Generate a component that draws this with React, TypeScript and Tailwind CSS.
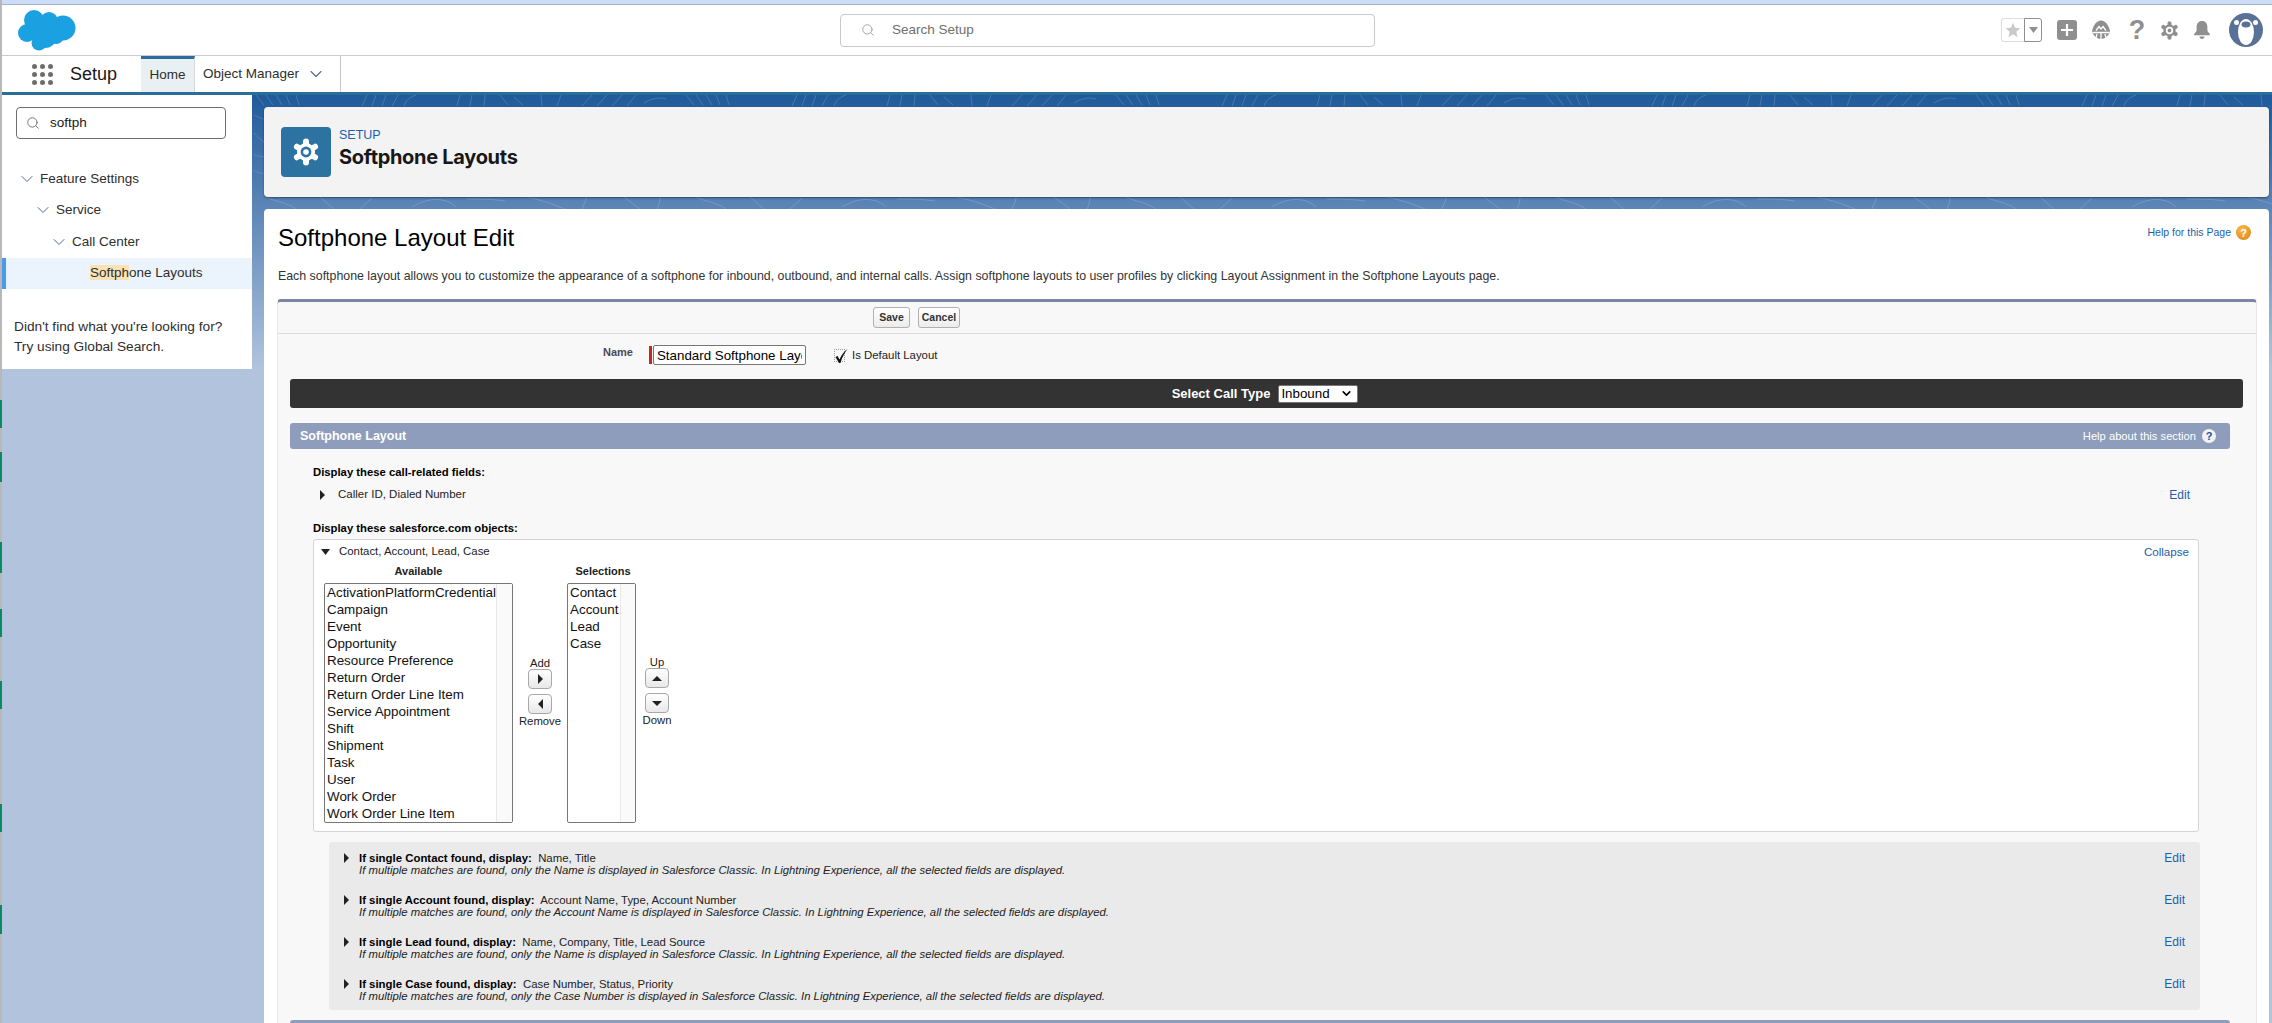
import { ChevronDown, Search } from "lucide-react";

const BLUE = "text-[#1a60ad]";

const available = ["ActivationPlatformCredential", "Campaign", "Event", "Opportunity", "Resource Preference", "Return Order", "Return Order Line Item", "Service Appointment", "Shift", "Shipment", "Task", "User", "Work Order", "Work Order Line Item"];
const selections = ["Contact", "Account", "Lead", "Case"];

const singles = [
  { obj: "Contact", fields: "Name, Title", name: "Name" },
  { obj: "Account", fields: "Account Name, Type, Account Number", name: "Account Name" },
  { obj: "Lead", fields: "Name, Company, Title, Lead Source", name: "Name" },
  { obj: "Case", fields: "Case Number, Status, Priority", name: "Case Number" },
];

function Tri({ dir, className = "" }: { dir: "right" | "left" | "up" | "down"; className?: string }) {
  const pts = { right: "0,0 10,5 0,10", left: "10,0 0,5 10,10", up: "0,10 5,0 10,10", down: "0,0 10,0 5,10" }[dir];
  return (
    <svg viewBox="0 0 10 10" preserveAspectRatio="none" className={className}>
      <polygon points={pts} fill="currentColor" />
    </svg>
  );
}

function Gear({ className = "", ring, dot }: { className?: string; ring: string; dot: string }) {
  return (
    <svg viewBox="0 0 28 28" className={className}>
      {[0, 60, 120].map((a) => (
        <line key={a} x1="14" y1="3.5" x2="14" y2="24.5" stroke="currentColor" strokeWidth="6" strokeLinecap="round" transform={`rotate(${a} 14 14)`} />
      ))}
      <circle cx="14" cy="14" r="9" fill="currentColor" />
      <circle cx="14" cy="14" r="5.4" fill={ring} />
      <circle cx="14" cy="14" r="2.8" fill={dot} />
    </svg>
  );
}

function ListBox({ items, width, track }: { items: string[]; width: string; track: string }) {
  return (
    <div className={`${width} h-[240px] flex border border-[#767676] rounded-[2px] bg-white overflow-hidden text-[13.4px] leading-[17px] text-[#111]`}>
      <div className="flex-1 pl-[2px] whitespace-nowrap overflow-hidden">
        {items.map((i) => <div key={i}>{i}</div>)}
      </div>
      <div className={`${track} h-full bg-[#fafafa] border-l border-[#e8e8e8]`} />
    </div>
  );
}

function ArrowBtn({ dir }: { dir: "right" | "left" | "up" | "down" }) {
  const size = dir === "right" || dir === "left" ? "w-[5px] h-[10px]" : "w-[10px] h-[5px]";
  return (
    <div className="w-[24px] h-[20px] flex items-center justify-center border border-[#a8a8a8] rounded-[4px] bg-[linear-gradient(#ffffff,#e8e8e8)] text-[#222]">
      <Tri dir={dir} className={size} />
    </div>
  );
}

function SectionHead({ title, help }: { title: string; help?: boolean }) {
  return (
    <div className="ml-[12px] mr-[26px] h-[26px] shrink-0 rounded-[3px] bg-[#8e9dbc] flex items-center justify-between pl-[10px] pr-[14px] text-white">
      <span className="text-[12.5px] font-bold">{title}</span>
      {help && (
        <span className="flex items-center gap-[6px] text-[11.2px]">
          Help about this section
          <span className="w-[14px] h-[14px] rounded-full bg-[#f2f2f2] text-[#1a4f9c] text-[11px] font-bold flex items-center justify-center">?</span>
        </span>
      )}
    </div>
  );
}

function BackgroundLines() {
  return (
    <svg className="absolute left-0 top-0 w-full h-[130px]" fill="none">
      <defs>
        <pattern id="banner" width="430" height="130" patternUnits="userSpaceOnUse" x="250">
          <g stroke="#ffffff" strokeOpacity="0.16" strokeWidth="1">
            <path d="M4 0l8 10M14 0l7 10M24 0l6 10M34 0l4 10M44 0l3 10M110 11l5-11M120 11l4-11M130 11l4-11M140 11l6-11M152 11c2-6 6-9 12-11" />
            <path d="M205 11l3-11M218 11l2-11M232 11l1-11M248 0l8 10M262 2l9 8M290 11l-1-11M305 11l4-11M330 11l10-11M345 11l10-11M360 11l10-11M375 11l9-11M392 8c8-5 16-6 22-4" />
            <path d="M14 102c10 5 20 5 30 12M68 102l14 12M120 103l-12 11M160 112c16-10 34-10 44 0M215 104c12 0 26 0 38 2M275 102c14 3 26 7 38 12M330 114c2-5 4-8 4-12M372 102l16 12M405 114c2-4 3-8 3-12" />
          </g>
        </pattern>
      </defs>
      <rect width="100%" height="100%" fill="url(#banner)" />
      <g stroke="#ffffff" strokeOpacity="0.14">
        <path d="M252 20c4 2 8 4 12 4M252 38c4 5 8 8 12 10M252 60c4 1 8 2 12 2M252 75c4 3 8 4 12 3" />
      </g>
    </svg>
  );
}

export default function App() {
  return (
    <div className="w-[2272px] h-[1023px] overflow-hidden flex bg-white font-['Liberation_Sans',sans-serif] text-[#181818]">
      {/* window edge behind the browser */}
      <div className="w-[2px] shrink-0 bg-[#b8b8b8] flex flex-col">
        <div className="mt-[400px] h-[28px] bg-[#0a8a62]" />
        <div className="mt-[24px] h-[30px] bg-[#0a8a62]" />
        <div className="mt-[60px] h-[31px] bg-[#0a8a62]" />
        <div className="mt-[36px] h-[28px] bg-[#0a8a62]" />
        <div className="mt-[44px] h-[28px] bg-[#0a8a62]" />
        <div className="mt-[95px] h-[28px] bg-[#0a8a62]" />
        <div className="mt-[73px] h-[29px] bg-[#0a8a62]" />
      </div>

      <div className="flex-1 min-w-0 flex flex-col">
        <div className="h-[5px] shrink-0 bg-[#ccdcf6] border-b border-[#a5b3cd]" />

        {/* global header */}
        <div className="h-[51px] shrink-0 border-b border-[#cccccc] flex items-center">
          <svg viewBox="0 0 58 41" className="ml-[16px] w-[58px] h-[41px] shrink-0" fill="#1ba0e1">
            <circle cx="16" cy="10" r="10" />
            <circle cx="31" cy="11" r="9" />
            <circle cx="45" cy="18" r="12.5" />
            <circle cx="27" cy="26" r="12" />
            <circle cx="21" cy="33" r="7.5" />
            <circle cx="9" cy="23" r="9" />
            <circle cx="38" cy="26" r="8" />
            <rect x="12" y="10" width="24" height="18" />
          </svg>
          <div className="ml-[764px] w-[535px] h-[33px] shrink-0 border border-[#c9c9c9] rounded-[4px] flex items-center pl-[20px] text-[13.5px] text-[#706e6b]">
            <Search className="w-[14px] h-[14px] text-[#a0a0a0]" strokeWidth={1.6} />
            <span className="ml-[17px]">Search Setup</span>
          </div>
          <div className="ml-[626px] w-[41px] h-[24px] shrink-0 flex">
            <div className="w-[23px] border border-r-0 border-[#dddddd] rounded-l-[3px] flex items-center justify-center">
              <svg viewBox="0 0 20 20" className="w-[16px] h-[16px]"><polygon points="10,1 12.6,7.2 19,7.8 14.2,12.2 15.6,19 10,15.4 4.4,19 5.8,12.2 1,7.8 7.4,7.2" fill="#c9c9c9" /></svg>
            </div>
            <div className="w-[18px] border border-[#8f8f8f] rounded-r-[3px] flex items-center justify-center text-[#8f8f8f]">
              <Tri dir="down" className="w-[9px] h-[6px]" />
            </div>
          </div>
          <svg viewBox="0 0 20 20" className="ml-[15px] w-[20px] h-[20px] shrink-0">
            <rect width="20" height="20" rx="3" fill="#8f8f8f" />
            <path d="M10 4v12M4 10h12" stroke="#fff" strokeWidth="2.2" />
          </svg>
          <svg viewBox="0 0 20 20" className="ml-[14px] w-[20px] h-[20px] shrink-0">
            <path d="M10 0.5c4.5 0 8 5 9 11-1.5 4.5-5 7.5-9 7.5s-7.5-3-9-7.5c1-6 4.5-11 9-11z" fill="#8f8f8f" />
            <path d="M1.5 12.5h17M5 10.5l3-4 2 2.5 2-2.5 3 4M10 13v6M6 14l-1 4M14 14l1 4" stroke="#fff" strokeWidth="1.3" fill="none" />
          </svg>
          <span className="ml-[20px] w-[12px] shrink-0 text-[27px] leading-[27px] text-[#8f8f8f] font-bold flex justify-center">?</span>
          <Gear className="ml-[17px] w-[19px] h-[19px] shrink-0 text-[#8f8f8f]" ring="#ffffff" dot="#8f8f8f" />
          <svg viewBox="0 0 18 18" className="ml-[14px] w-[18px] h-[18px] shrink-0" fill="#8f8f8f">
            <path d="M9 0c3.4 0 5.4 2.6 5.4 6v3.5c0 1.2 2.3 2.8 2.6 4 .1.4-.2.7-.6.7H1.6c-.4 0-.7-.3-.6-.7.3-1.2 2.6-2.8 2.6-4V6C3.6 2.6 5.6 0 9 0z" />
            <path d="M6.5 15.5h5c0 1.4-1.1 2.5-2.5 2.5s-2.5-1.1-2.5-2.5z" />
          </svg>
          <svg viewBox="0 0 34 34" className="ml-[18px] w-[34px] h-[34px] shrink-0">
            <circle cx="17" cy="17" r="17" fill="#5a7197" />
            <circle cx="7.5" cy="9.5" r="2.5" fill="#fff" />
            <circle cx="26.5" cy="9.5" r="2.5" fill="#fff" />
            <ellipse cx="17" cy="19" rx="8" ry="13" fill="#fff" />
            <ellipse cx="17" cy="11.5" rx="4.5" ry="3" fill="#5a7197" />
          </svg>
        </div>

        {/* app nav */}
        <div className="h-[39px] shrink-0 border-b-[3px] border-[#2a6d99] flex items-stretch">
          <div className="ml-[30px] my-auto grid grid-cols-3 gap-[3px] w-[21px]">
            {Array.from({ length: 9 }).map((_, i) => <span key={i} className="w-[5px] h-[5px] rounded-full bg-[#706e6b]" />)}
          </div>
          <span className="ml-[17px] my-auto text-[18px] text-[#181818]">Setup</span>
          <div className="ml-[24px] w-[54px] border-t-[3px] border-[#2a6d99] bg-[#e9f0f4] border-r border-r-[#d8d8d8] flex items-center justify-center text-[13.5px] text-[#2e2e2e]">Home</div>
          <div className="w-[146px] border-r border-[#c9c9c9] flex items-center pl-[8px] text-[13.5px] text-[#2e2e2e]">
            Object Manager
            <ChevronDown className="ml-[7px] w-[20px] h-[20px] text-[#54698d]" strokeWidth={1.3} />
          </div>
        </div>

        {/* page body */}
        <div className="relative flex-1 min-h-0 flex items-start bg-[linear-gradient(#1f5a9b_0,#b1c3dd_272px)]">
          <BackgroundLines />

          <aside className="relative w-[250px] shrink-0 bg-white pt-[12px] pb-[12px]">
            <div className="ml-[14px] w-[210px] h-[32px] border border-[#706e6b] rounded-[4px] flex items-center pl-[9px] text-[13.5px]">
              <Search className="w-[14px] h-[14px] text-[#706e6b]" strokeWidth={1.6} />
              <span className="ml-[10px]">softph</span>
            </div>
            <div className="mt-[24px] text-[13.5px] text-[#2e2e2e]">
              <div className="h-[31.5px] flex items-center pl-[15px]"><ChevronDown className="w-[20px] h-[20px] text-[#54698d]" strokeWidth={1.2} /><span className="ml-[3px]">Feature Settings</span></div>
              <div className="h-[31.5px] flex items-center pl-[31px]"><ChevronDown className="w-[20px] h-[20px] text-[#54698d]" strokeWidth={1.2} /><span className="ml-[3px]">Service</span></div>
              <div className="h-[31.5px] flex items-center pl-[47px]"><ChevronDown className="w-[20px] h-[20px] text-[#54698d]" strokeWidth={1.2} /><span className="ml-[3px]">Call Center</span></div>
              <div className="h-[31.5px] flex items-center pl-[84px] bg-[#ebf3fd] border-l-4 border-[#4b98f0]">
                <span><mark className="bg-[#fae2b5] text-inherit">Softph</mark>one Layouts</span>
              </div>
            </div>
            <p className="mt-[28px] ml-[12px] text-[13.7px] leading-[20px] text-[#2e2e2e]">Didn't find what you're looking for?<br />Try using Global Search.</p>
          </aside>

          <main className="relative flex-1 min-w-0 ml-[12px] mr-[3px] pt-[12px] h-full flex flex-col">
            <div className="h-[90px] shrink-0 rounded-[4px] bg-[#f3f3f3] shadow-[0_1px_2px_rgba(0,0,0,0.45)] flex items-center pl-[17px]">
              <div className="w-[50px] h-[50px] rounded-[4px] bg-[#2c73a1] flex items-center justify-center text-white">
                <Gear className="w-[28px] h-[28px]" ring="#2c73a1" dot="#ffffff" />
              </div>
              <div className="ml-[8px] mt-[-9px]">
                <div className={`text-[12.5px] leading-[18px] ${BLUE}`}>SETUP</div>
                <div className="text-[20px] leading-[26px] font-bold font-['Inter',sans-serif] tracking-[-0.3px] text-[#181818]">Softphone Layouts</div>
              </div>
            </div>

            <div className="mt-[12px] flex-1 min-h-0 rounded-t-[4px] bg-white pl-[13px] pr-[12px] pt-[14px] overflow-hidden">
              <div className="ml-[1px] flex items-start justify-between">
                <h1 className="text-[24px] leading-[30px] text-black">Softphone Layout Edit</h1>
                <div className="mt-[2px] mr-[6px] flex items-center gap-[5px]">
                  <span className={`text-[10.5px] ${BLUE}`}>Help for this Page</span>
                  <span className="w-[15px] h-[15px] rounded-full bg-[radial-gradient(circle_at_40%_30%,#f8b84a,#d9820f)] text-white text-[11px] font-bold flex items-center justify-center">?</span>
                </div>
              </div>
              <p className="mt-[14px] ml-[1px] text-[12.37px] leading-[18px] text-[#333]">Each softphone layout allows you to customize the appearance of a softphone for inbound, outbound, and internal calls. Assign softphone layouts to user profiles by clicking Layout Assignment in the Softphone Layouts page.</p>

              <div className="mt-[14px] border-t-[3px] border-x border-x-[#e6e6e6] border-t-[#7a86a3] rounded-t-[4px] bg-[#f8f8f8] pb-[40px]">
                <div className="h-[32px] border-b border-[#dcdcdc] flex items-center gap-[8px] pl-[595px]">
                  <button className="w-[37px] h-[21px] rounded-[3px] border border-[#b0b0b0] bg-[linear-gradient(#ffffff,#ececec)] text-[10.5px] font-bold text-[#333]">Save</button>
                  <button className="w-[42px] h-[21px] rounded-[3px] border border-[#b0b0b0] bg-[linear-gradient(#ffffff,#ececec)] text-[10.5px] font-bold text-[#333]">Cancel</button>
                </div>

                <div className="mt-[11px] flex items-start pl-[325px] h-[20px]">
                  <span className="mt-[-1px] text-[11px] font-bold text-[#4a4a56]">Name</span>
                  <span className="ml-[16px] w-[3px] h-[18px] mt-[1px] bg-[#c5281c]" />
                  <input readOnly value="Standard Softphone Layout" className="ml-[1px] w-[153px] h-[20px] px-[3px] bg-white border border-[#767676] rounded-[2px] text-[13.33px] text-black outline-none" />
                  <span className="ml-[28px] w-[11px] h-[13px] mt-[4px] border border-dotted border-[#999] relative">
                    <svg viewBox="0 0 14 16" className="absolute left-[-1px] top-[-2px] w-[14px] h-[16px]"><path d="M1.5 9l2-1 2 3.500C7.500 7 10 3.500 13.500 1c-3 4-5.500 8.500-7 14h-1.500z" fill="#111" /></svg>
                  </span>
                  <span className="ml-[7px] mt-[2px] text-[11.4px] text-[#222]">Is Default Layout</span>
                </div>

                <div className="mt-[14px] ml-[12px] mr-[13px] pr-[3px] h-[29px] rounded-[3px] bg-[#333333] flex items-center justify-center gap-[8px] text-white">
                  <span className="text-[13px] font-bold">Select Call Type</span>
                  <div className="w-[80px] h-[18px] bg-white border border-[#767676] rounded-[2px] flex items-center justify-between pl-[2px] pr-[4px] text-[13.33px] text-black">
                    Inbound
                    <ChevronDown className="w-[13px] h-[13px]" strokeWidth={3} />
                  </div>
                </div>

                <div className="mt-[15px]"><SectionHead title="Softphone Layout" help /></div>

                <div className="mt-[16px] pl-[35px] pr-[57px] text-[11.4px]">
                  <div className="font-bold leading-[14px] text-black text-[11.3px]">Display these call-related fields:</div>
                  <div className="mt-[9px] h-[14px] flex items-center pl-[7px] text-[#222]">
                    <Tri dir="right" className="w-[5px] h-[10px] text-[#222]" />
                    <span className="ml-[13px] flex-1 text-[11.5px]">Caller ID, Dialed Number</span>
                    <span className={`mr-[9px] text-[12px] ${BLUE}`}>Edit</span>
                  </div>
                  <div className="mt-[19px] font-bold leading-[14px] text-black text-[11.3px]">Display these salesforce.com objects:</div>

                  <div className="mt-[4px] h-[293px] border border-[#d4d4d4] rounded-[3px] bg-white">
                    <div className="h-[24px] flex items-center pl-[7px] pr-[9px]">
                      <Tri dir="down" className="w-[9px] h-[6px] text-[#222]" />
                      <span className="ml-[9px] flex-1 text-[#222]">Contact, Account, Lead, Case</span>
                      <span className={`text-[11.6px] ${BLUE}`}>Collapse</span>
                    </div>
                    <div className="flex items-start pl-[10px]">
                      <div className="w-[189px]">
                        <div className="h-[14px] leading-[14px] mb-[5px] text-center font-bold text-[11px] text-[#222]">Available</div>
                        <ListBox items={available} width="w-[189px]" track="w-[16px]" />
                      </div>
                      <div className="w-[54px] pt-[93px] flex flex-col items-center text-[11.3px] text-[#222]">
                        <span className="h-[12px] leading-[12px]">Add</span>
                        <ArrowBtn dir="right" />
                        <div className="h-[5px]" />
                        <ArrowBtn dir="left" />
                        <span className="h-[14px] leading-[14px]">Remove</span>
                      </div>
                      <div className="w-[69px]">
                        <div className="h-[14px] leading-[14px] mb-[5px] text-center font-bold text-[11px] text-[#222] pl-[3px]">Selections</div>
                        <ListBox items={selections} width="w-[69px]" track="w-[15px]" />
                      </div>
                      <div className="ml-[9px] w-[24px] pt-[92px] flex flex-col items-center text-[11.3px] text-[#222]">
                        <span className="h-[12px] leading-[12px]">Up</span>
                        <ArrowBtn dir="up" />
                        <div className="h-[5px]" />
                        <ArrowBtn dir="down" />
                        <span className="h-[14px] leading-[14px]">Down</span>
                      </div>
                    </div>
                  </div>
                </div>

                <div className="mt-[10px] ml-[51px] mr-[56px] h-[168px] rounded-[3px] bg-[#eaeaea] pt-[10px] pl-[15px] pr-[15px] flex flex-col gap-[16px]">
                  {singles.map((s) => (
                    <div key={s.obj} className="h-[26px] flex items-start text-[11.4px] leading-[12px] text-[#222]">
                      <Tri dir="right" className="mt-[1px] w-[5px] h-[10px] shrink-0" />
                      <div className="ml-[10px] flex-1">
                        <div><b className="text-black">If single {s.obj} found, display:</b>&nbsp; {s.fields}</div>
                        <div className="italic text-[11.35px]">If multiple matches are found, only the {s.name} is displayed in Salesforce Classic. In Lightning Experience, all the selected fields are displayed.</div>
                      </div>
                      <span className={`text-[12px] ${BLUE}`}>Edit</span>
                    </div>
                  ))}
                </div>

                <div className="mt-[10px]"><SectionHead title="" /></div>
              </div>
            </div>
          </main>
        </div>
      </div>
    </div>
  );
}
